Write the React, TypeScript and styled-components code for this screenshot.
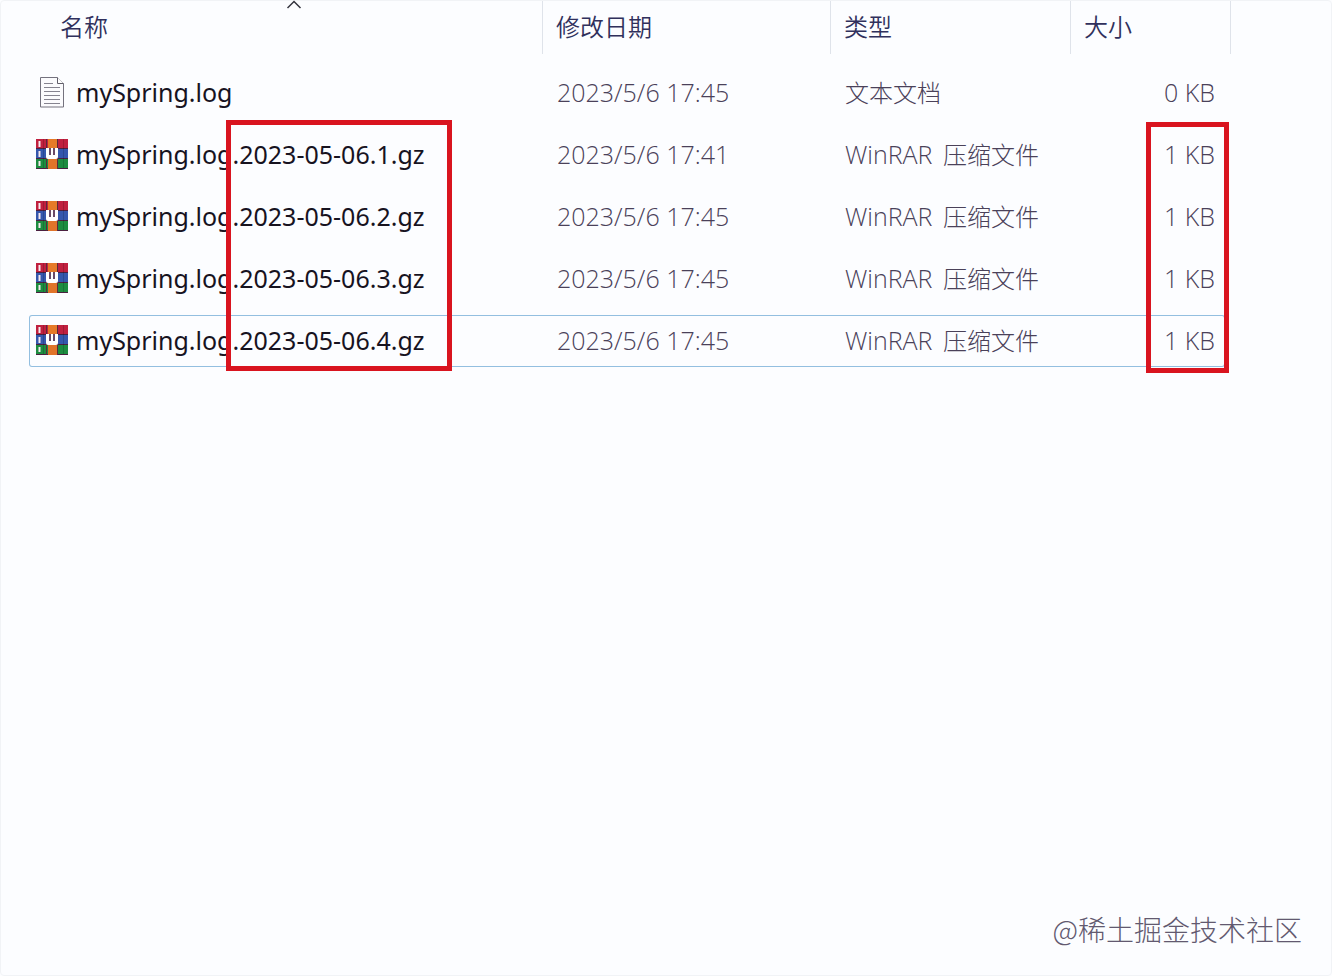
import React from "react";
import styled, { createGlobalStyle } from "styled-components";

const GlobalStyle = createGlobalStyle`
  * { box-sizing: border-box; }
  body {
    margin: 0;
    background: #fcfdff;
    font-family: "Open Sans", "Noto Sans CJK SC", sans-serif;
    font-size: 24px;
    line-height: 32px;
  }
`;

const Window = styled.main`
  display: flex;
  flex-direction: column;
  min-height: 100vh;
  border: 1px solid #f1f3f6;
  border-radius: 4px;
`;

const ListView = styled.section`
  position: relative;
  padding: 0 100px 0 28px;
`;

const FileTable = styled.table`
  display: block;
`;

const Head = styled.thead`
  display: block;
  margin-bottom: 13px;
  padding-left: 17px;
`;

const HeadRow = styled.tr`
  display: grid;
  grid-template-columns: minmax(0, 1fr) 288px 240px 160px;
`;

const HeadCell = styled.th`
  padding: 0;
  font-weight: 350;
  border-right: 1px solid #dfe3ea;
`;

const SortButton = styled.button<{ $first?: boolean }>`
  position: relative;
  display: block;
  width: 100%;
  height: 53px;
  padding: 0 13px 2px ${(p) => (p.$first ? 14 : 13)}px;
  border: 0;
  background: none;
  color: #30305c;
  font: inherit;
  text-align: left;
`;

const SortArrow = styled.svg`
  position: absolute;
  top: -1px;
  left: 50%;
  width: 16px;
  height: 9px;
  margin-left: -8px;
`;

const Body = styled.tbody`
  display: grid;
  gap: 10px;
  font-size: 25px;
`;

const Row = styled.tr<{ $focused: boolean }>`
  display: grid;
  grid-template-columns: minmax(0, 1fr) 288px 240px 154px;
  align-items: center;
  height: 52px;
  margin-right: 6px;
  border-radius: 3px;
  box-shadow: ${(p) => (p.$focused ? "inset 0 0 0 1px #93bfe0" : "none")};
`;

const NameCell = styled.td`
  display: flex;
  align-items: center;
  gap: 8px;
  padding: 0 0 0 7px;
  color: #17131f;
  font-family: "Noto Sans", "Noto Sans CJK SC", sans-serif;
  white-space: nowrap;
`;

const FileName = styled.span`
  padding-bottom: 2px;
`;

const InfoCell = styled.td<{ $end?: boolean }>`
  padding: 0 10px 2px 14px;
  color: #4a4159;
  font-weight: 300;
  white-space: nowrap;
  text-align: ${(p) => (p.$end ? "right" : "left")};
`;

const AppName = styled.span`
  margin-right: 4px;
`;

const Kind = styled.span`
  font-size: 24px;
`;

const FileIcon = styled.svg`
  flex: none;
  width: 32px;
  height: 32px;
`;

const Highlight = styled.div`
  position: absolute;
  height: 251px;
  border: 5px solid #d9141f;
  pointer-events: none;
`;

const SuffixHighlight = styled(Highlight)`
  top: 119px;
  left: 225px;
  width: 226px;
`;

const SizeHighlight = styled(Highlight)`
  top: 121px;
  right: 102px;
  width: 83px;
`;

const Watermark = styled.footer`
  margin-top: auto;
  padding: 0 29px 26px;
  color: #62596f;
  font-family: "Noto Sans CJK SC", sans-serif;
  font-size: 28px;
  font-weight: 300;
  line-height: 40px;
  text-align: right;
`;

function TextIcon() {
  return (
    <FileIcon viewBox="0 0 32 32" aria-hidden="true">
      <path d="M4.500 .5H21l6.500 6v23.500h-23z" fill="#fbfbfd" stroke="#74727e" />
      <path d="M21.500 .5v6h6" fill="#fff" stroke="#5f5d69" />
      <path
        d="M8 6.500h9M8 10.500h16M8 14.500h16M8 18.500h16M8 22.500h16M8 26.500h16"
        stroke="#85838f"
        fill="none"
      />
    </FileIcon>
  );
}

function ArchiveIcon() {
  return (
    <FileIcon viewBox="0 0 32 32" aria-hidden="true">
      <rect width="32" height="10" fill="#c0203f" />
      <rect y="10" width="32" height="10" fill="#3557ad" />
      <rect y="20" width="32" height="10" fill="#1d8c40" />
      <path d="M0 9.500h32M0 19.500h32M0 29.500h32" stroke="#4a2040" />
      <path d="M10.500 0v30M21.500 0v30" stroke="#5a2a3c" />
      <rect x="12" width="9" height="10" fill="#e67a28" />
      <rect x="12" y="20" width="9" height="10" fill="#e0742a" />
      <path d="M3.500 2v6M3.500 12v6M3.500 22v5" stroke="#f6e8ee" strokeWidth="2" />
      <path d="M7.500 0v29M27.500 0v29" stroke="#000" strokeOpacity=".16" />
      <path d="M10 9h12v9q0 2-2 2h-8q-2 0-2-2z" fill="#fff" />
      <path d="M14 9v7M18 9v7" stroke="#6a4a68" strokeWidth="2" />
    </FileIcon>
  );
}

type FileEntry = { name: string; date: string; app?: string; kind: string; size: string };

const archive = (index: number, time: string): FileEntry => ({
  name: `mySpring.log.2023-05-06.${index}.gz`,
  date: `2023/5/6 ${time}`,
  app: "WinRAR",
  kind: "压缩文件",
  size: "1 KB",
});

const files: FileEntry[] = [
  { name: "mySpring.log", date: "2023/5/6 17:45", kind: "文本文档", size: "0 KB" },
  archive(1, "17:41"),
  archive(2, "17:45"),
  archive(3, "17:45"),
  archive(4, "17:45"),
];

const columns = ["名称", "修改日期", "类型", "大小"];

export default function App() {
  return (
    <>
      <GlobalStyle />
      <Window>
        <ListView>
          <FileTable>
            <Head>
              <HeadRow>
                {columns.map((label, i) => (
                  <HeadCell key={label} scope="col" aria-sort={i === 0 ? "ascending" : undefined}>
                    <SortButton type="button" $first={i === 0}>
                      {i === 0 && (
                        <SortArrow viewBox="0 0 16 9" aria-hidden="true">
                          <path d="M1.500 8L8 1.500l6.500 6.500" fill="none" stroke="#34343e" strokeWidth="1.500" />
                        </SortArrow>
                      )}
                      {label}
                    </SortButton>
                  </HeadCell>
                ))}
              </HeadRow>
            </Head>
            <Body>
              {files.map((file, i) => (
                <Row key={file.name} $focused={i === files.length - 1}>
                  <NameCell>
                    {file.app ? <ArchiveIcon /> : <TextIcon />}
                    <FileName>{file.name}</FileName>
                  </NameCell>
                  <InfoCell>{file.date}</InfoCell>
                  <InfoCell>
                    {file.app && <AppName>{file.app} </AppName>}
                    <Kind>{file.kind}</Kind>
                  </InfoCell>
                  <InfoCell $end>{file.size}</InfoCell>
                </Row>
              ))}
            </Body>
          </FileTable>
          <SuffixHighlight />
          <SizeHighlight />
        </ListView>
        <Watermark>@稀土掘金技术社区</Watermark>
      </Window>
    </>
  );
}
